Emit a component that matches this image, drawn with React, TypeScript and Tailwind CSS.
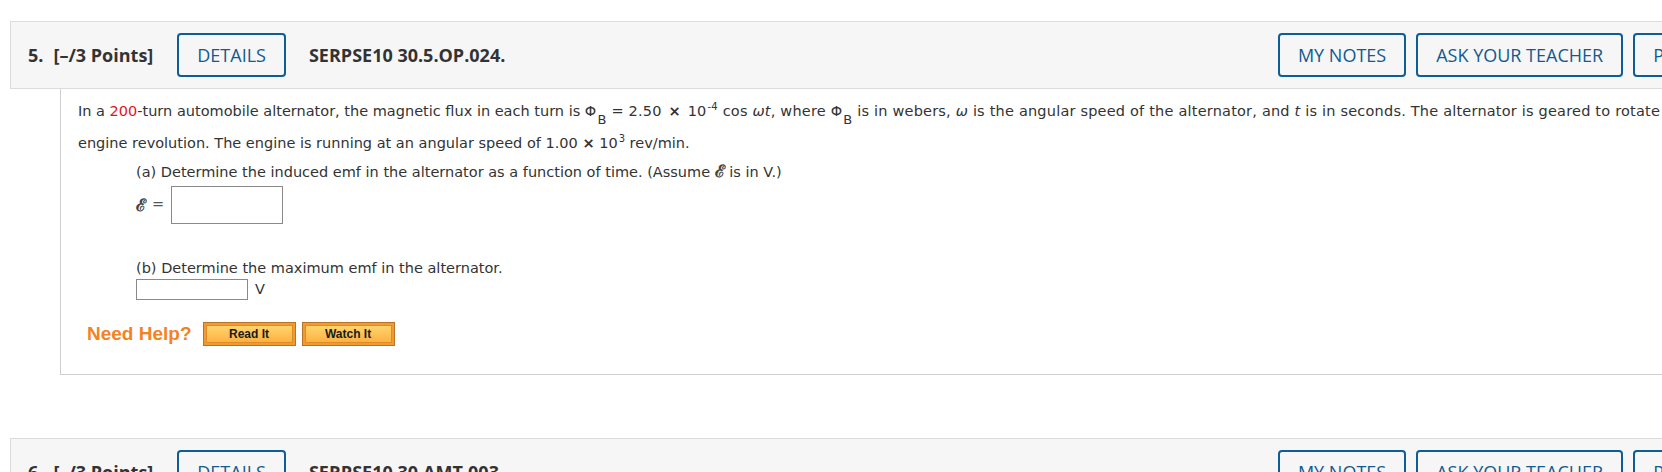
import React from 'react';

interface HeaderProps {
  num: number;
  code: string;
}

function OutlineButton({ children, className = '' }: { children: React.ReactNode; className?: string }) {
  return (
    <button
      className={`flex h-[44px] items-center rounded-[4px] border-2 border-[#0d5d97] px-[18px] text-[18px] font-normal text-[#125a8f] ${className}`}
    >
      {children}
    </button>
  );
}

function QuestionHeader({ num, code }: HeaderProps) {
  return (
    <div className="flex h-[68px] w-[1851px] items-center border border-[#dcdcdc] bg-[#f6f6f6] pl-[17px] pr-[18px] font-['Open_Sans',sans-serif] text-[18px] text-[#333]">
      <span className="font-bold">{num}.</span>
      <span className="ml-[10px] font-bold">[–/3 Points]</span>
      <OutlineButton className="ml-[24px]">DETAILS</OutlineButton>
      <span className="ml-[23px] font-bold">{code}</span>
      <div className="ml-auto flex gap-[10px]">
        <OutlineButton>MY NOTES</OutlineButton>
        <OutlineButton>ASK YOUR TEACHER</OutlineButton>
        <OutlineButton>PRACTICE ANOTHER</OutlineButton>
      </div>
    </div>
  );
}

function HelpButton({ label }: { label: string }) {
  return (
    <button className="flex h-[24px] w-[93px] border border-[#b9722a] bg-[#f39a2e] p-[2px]">
      <span className="flex h-full w-full items-center justify-center border border-[#e08a2a] bg-gradient-to-b from-[#ffd36e] to-[#fcb23e] font-['Liberation_Sans',Arial,sans-serif] text-[12px] font-bold text-[#1a1a1a]">
        {label}
      </span>
    </button>
  );
}

const Sub = ({ children }: { children: React.ReactNode }) => (
  <span className="relative top-[8px] ml-[1px] text-[13px] leading-none">{children}</span>
);

const Sup = ({ children }: { children: React.ReactNode }) => (
  <span className="relative -top-[6px] ml-[1px] text-[10px] leading-none">{children}</span>
);

const Times = () => <b className="mx-[2px]">×</b>;

const Script = () => (
  <span className="font-['DejaVu_Serif',serif] text-[17px] font-bold leading-none text-[#444]">ℰ</span>
);

export default function App() {
  return (
    <div className="h-[472px] w-[1662px] overflow-hidden bg-white">
      <div className="w-[1900px] pl-[10px] pt-[21px]">
        <QuestionHeader num={5} code="SERPSE10 30.5.OP.024." />

        {/* question body */}
        <div className="ml-[50px] border-b border-l border-[#cfcfcf] pb-[28px] pl-[17px] pt-[6px] font-['DejaVu_Sans',Verdana,sans-serif] text-[14.5px] text-[#333]">
          <div className="whitespace-nowrap leading-[32px]">
            In a <span className="text-[#e4141b]">200</span>-turn automobile alternator, the magnetic flux in each turn
            is{' '}
            <span className="tracking-[0.2px]">
              Φ<Sub>B</Sub> = 2.50 <Times /> 10<Sup>-4</Sup> cos <i>ωt</i>, where Φ<Sub>B</Sub> is in webers,{' '}
              <i>ω</i> is the angular speed of the alternator, and <i>t</i> is in seconds. The alternator is geared to
              rotate three times for each
            </span>
          </div>
          <div className="whitespace-nowrap leading-[32px]">
            engine revolution. The engine is running at an angular speed of 1.00 <b>×</b> 10<Sup>3</Sup> rev/min.
          </div>

          <div className="pl-[58px] leading-[26px]">
            (a) Determine the induced emf in the alternator as a function of time. (Assume <Script /> is in V.)
          </div>
          <div className="mt-[1px] flex h-[38px] items-center pl-[58px]">
            <Script />
            <span className="ml-[6px] text-[#555]">=</span>
            <input className="ml-[7px] h-[38px] w-[112px] border border-[#8a8a8a] bg-white" />
          </div>

          <div className="mt-[34px] pl-[58px] leading-[20px]">(b) Determine the maximum emf in the alternator.</div>
          <div className="mt-[1px] flex h-[21px] items-center pl-[58px]">
            <input className="h-[21px] w-[112px] border border-[#8a8a8a] bg-white" />
            <span className="ml-[7px]">V</span>
          </div>

          <div className="mt-[22px] flex h-[24px] items-center pl-[9px]">
            <span className="font-['Liberation_Sans',Arial,sans-serif] text-[19px] font-bold text-[#f5821f]">
              Need Help?
            </span>
            <div className="ml-[11px] flex gap-[6px]">
              <HelpButton label="Read It" />
              <HelpButton label="Watch It" />
            </div>
          </div>
        </div>

        <div className="mt-[63px]">
          <QuestionHeader num={6} code="SERPSE10 30.AMT.003." />
        </div>
      </div>
    </div>
  );
}
